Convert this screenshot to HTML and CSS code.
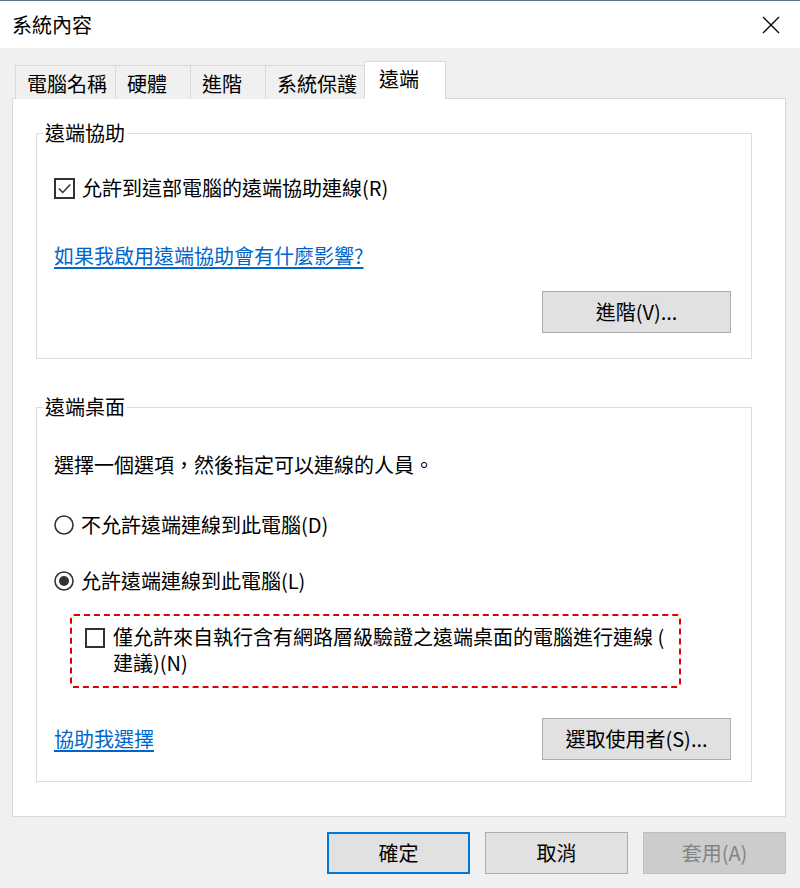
FILE: index.html
```html
<!DOCTYPE html>
<html lang="zh-Hant">
<head>
<meta charset="utf-8">
<title>系統內容</title>
<link rel="stylesheet" href="styles.css">
</head>
<body>
<div class="window">
  <div class="titlebar">
    <span class="title">系統內容</span>
    <svg class="close" width="18" height="18" viewBox="0 0 18 18"><path d="M1 1 L17 17 M17 1 L1 17" stroke="#000" stroke-width="1.3" fill="none"/></svg>
  </div>
  <div class="body">
    <div class="tabs">
      <div class="tab t1">電腦名稱</div>
      <div class="tab t2">硬體</div>
      <div class="tab t3">進階</div>
      <div class="tab t4">系統保護</div>
      <div class="tab active">遠端</div>
    </div>
    <div class="panel">
      <fieldset class="group g1">
        <legend>遠端協助</legend>
        <div class="row">
          <svg class="box" width="21" height="21" viewBox="0 0 21 21"><rect x="1" y="1" width="19" height="19" fill="#fff" stroke="#333" stroke-width="2"/><path d="M4.8 10.5 L8.8 14.5 L16.2 6.5" stroke="#333" stroke-width="1.5" fill="none"/></svg>
          <span>允許到這部電腦的遠端協助連線(R)</span>
        </div>
        <a class="link l1" href="#">如果我啟用遠端協助會有什麼影響?</a>
        <div class="btnrow">
          <button class="btn">進階(V)...</button>
        </div>
      </fieldset>
      <fieldset class="group g2">
        <legend>遠端桌面</legend>
        <div class="desc">選擇一個選項，然後指定可以連線的人員。</div>
        <div class="row r1">
          <svg class="radio" width="20" height="20" viewBox="0 0 20 20"><circle cx="10" cy="10" r="9" fill="#fff" stroke="#333" stroke-width="1.6"/></svg>
          <span>不允許遠端連線到此電腦(D)</span>
        </div>
        <div class="row r2">
          <svg class="radio" width="20" height="20" viewBox="0 0 20 20"><circle cx="10" cy="10" r="9" fill="#fff" stroke="#333" stroke-width="1.6"/><circle cx="10" cy="10" r="5" fill="#333"/></svg>
          <span>允許遠端連線到此電腦(L)</span>
        </div>
        <div class="dashed">
          <svg class="box nla" width="20" height="20" viewBox="0 0 20 20"><rect x="1" y="1" width="18" height="18" fill="#fff" stroke="#333" stroke-width="2"/></svg>
          <span class="wrap">僅允許來自執行含有網路層級驗證之遠端桌面的電腦進行連線 (<br>建議)(N)</span>
        </div>
        <div class="helprow">
          <a class="link" href="#">協助我選擇</a>
          <button class="btn">選取使用者(S)...</button>
        </div>
      </fieldset>
    </div>
    <div class="footer">
      <button class="btn small default">確定</button>
      <button class="btn small">取消</button>
      <button class="btn small disabled">套用(A)</button>
    </div>
  </div>
</div>
</body>
</html>
```

FILE: styles.css
```css
* { box-sizing: border-box; }
html, body {
  margin: 0;
  padding: 0;
}
body {
  width: 800px;
  height: 888px;
  overflow: hidden;
  background: #f0f0f0;
  font-family: "Noto Sans CJK TC", "Noto Sans", sans-serif;
  font-size: 20px;
  line-height: 24px;
  color: #000;
}
.window {
  width: 800px;
  height: 888px;
  display: flex;
  flex-direction: column;
}
.titlebar {
  height: 48px;
  background: #fff;
  border-top: 1px solid #56758f;
  display: flex;
  align-items: center;
  justify-content: space-between;
  padding: 0 20px 0 12px;
}
.title {
  display: block;
  padding-top: 1px;
}
.close { display: block; margin-top: 1px; }
.body {
  flex: 1;
  padding: 13px 14px 0 12px;
}
.tabs {
  display: flex;
  align-items: flex-end;
  padding-left: 3px;
  margin-bottom: -1px;
}
.tab {
  height: 34px;
  border: 1px solid #d9d9d9;
  border-bottom: none;
  background: #f0f0f0;
  padding: 6px 0 0 11px;
  white-space: nowrap;
}
.tab + .tab { margin-left: -1px; }
.t1 { width: 101px; }
.t2 { width: 76px; }
.t3 { width: 76px; }
.t4 { width: 101px; }
.tab.active {
  height: 38px;
  width: 82px;
  margin-left: -2px;
  background: #fff;
  padding: 5px 0 0 14px;
  position: relative;
  z-index: 1;
}
.panel {
  background: #fff;
  border: 1px solid #d9d9d9;
  padding: 22px 33px 34px 23px;
}
.group {
  margin: 0;
  border: 1px solid #dcdcdc;
  padding: 31px 20px 25px 17px;
  min-width: 0;
}
.group legend {
  padding: 0 2px;
  margin-left: -11px;
  line-height: 24px;
}
.row {
  display: flex;
  align-items: center;
  gap: 7px;
  height: 24px;
}
.row svg { display: block; flex: none; }
.link {
  display: block;
  width: max-content;
  color: #0066cc;
  text-decoration: underline;
  text-underline-offset: 3px;
}
.l1 { margin-top: 44px; }
.btnrow {
  display: flex;
  justify-content: flex-end;
  margin-top: 23px;
}
.btn {
  font: inherit;
  color: #000;
  width: 189px;
  height: 42px;
  background: #e1e1e1;
  border: 1px solid #adadad;
  padding: 0;
  line-height: 24px;
}
.g2 {
  margin-top: 36px;
  padding: 34px 20px 21px 17px;
}
.desc { height: 24px; }
.r1 { margin-top: 36px; }
.r2 { margin-top: 32px; }
.dashed {
  margin: 21px 0 0 16px;
  width: 611px;
  border: 2px dashed #e00000;
  border-radius: 4px;
  padding: 8px 10px 10px 13px;
  display: flex;
  align-items: flex-start;
  gap: 8px;
}
.nla { display: block; flex: none; margin-top: 4px; }
.wrap { line-height: 26px; }
.helprow {
  margin-top: 30px;
  display: flex;
  justify-content: space-between;
  align-items: center;
}
.footer {
  display: flex;
  justify-content: flex-end;
  gap: 15px;
  margin-top: 15px;
}
.btn.small { width: 143px; }
.btn.default { border: 2px solid #0078d7; }
.btn.disabled {
  background: #cccccc;
  border-color: #bfbfbf;
  color: #838383;
}
```
